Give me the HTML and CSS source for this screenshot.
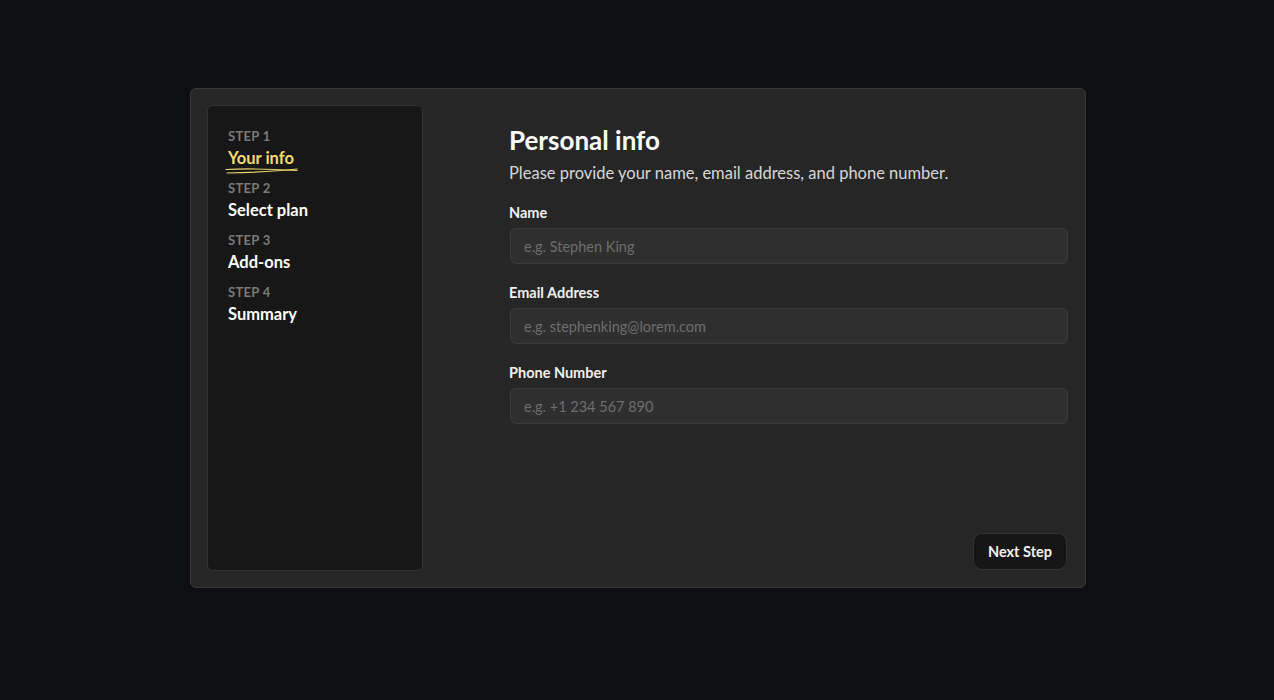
FILE: index.html
```html
<!DOCTYPE html>
<html lang="en">
<head>
<meta charset="utf-8">
<title>Multi-step form</title>
<link rel="stylesheet" href="styles.css">
</head>
<body>
<div class="page">
  <div class="card">
    <aside class="sidebar">
      <div class="step">
        <div class="step-num">Step 1</div>
        <div class="step-name active">Your info
          <svg class="scribble" width="74" height="8" viewBox="0 0 74 8"><path d="M1 2.5 C20 1.5 45 2 72 3.5" stroke="#e8d36a" stroke-width="1.2" fill="none" stroke-linecap="round"/><path d="M2 6 C25 5.5 50 4.5 72 2" stroke="#e8d36a" stroke-width="1.2" fill="none" stroke-linecap="round"/></svg>
        </div>
      </div>
      <div class="step">
        <div class="step-num">Step 2</div>
        <div class="step-name">Select plan</div>
      </div>
      <div class="step">
        <div class="step-num">Step 3</div>
        <div class="step-name">Add-ons</div>
      </div>
      <div class="step">
        <div class="step-num">Step 4</div>
        <div class="step-name">Summary</div>
      </div>
    </aside>
    <main class="main">
      <h1 class="title">Personal info</h1>
      <p class="subtitle">Please provide your name, email address, and phone number.</p>
      <div class="field">
        <label class="label">Name</label>
        <input class="input" type="text" placeholder="e.g. Stephen King">
      </div>
      <div class="field">
        <label class="label">Email Address</label>
        <input class="input" type="text" placeholder="e.g. stephenking@lorem.com">
      </div>
      <div class="field">
        <label class="label">Phone Number</label>
        <input class="input" type="text" placeholder="e.g. +1 234 567 890">
      </div>
      <div class="actions">
        <button class="btn">Next Step</button>
      </div>
    </main>
  </div>
</div>
</body>
</html>
```
FILE: styles.css
```css
* { box-sizing: border-box; }
html, body { margin: 0; padding: 0; }
body {
  background: #0d0f12;
  font-family: Lato, "Noto Sans", sans-serif;
  color: #f2f2f2;
}
.page {
  padding: 88px 0 0 190px;
}
.card {
  width: 896px;
  height: 500px;
  background: #262626;
  border: 1px solid #3a3a3a;
  border-radius: 6px;
  padding: 16px 17px 16px 16px;
  display: grid;
  grid-template-columns: 216px 1fr;
}
.sidebar {
  background: #171717;
  border: 1px solid #323232;
  border-radius: 6px;
  padding: 21px 20px;
  display: flex;
  flex-direction: column;
  gap: 8px;
}
.step-num {
  font-size: 13px;
  font-weight: 700;
  color: #7a7a7a;
  text-transform: uppercase;
  letter-spacing: 0.3px;
  line-height: 18px;
}
.step-name {
  font-size: 16.5px;
  font-weight: 700;
  color: #ffffff;
  line-height: 26px;
  position: relative;
}
.step-name.active { color: #f4dc6c; }
.scribble {
  position: absolute;
  left: -3px;
  top: 22px;
}
.main {
  padding: 19px 0 1px 86px;
  display: flex;
  flex-direction: column;
}
.title {
  margin: 0;
  font-size: 26px;
  font-weight: 700;
  line-height: 32px;
  color: #ffffff;
}
.subtitle {
  margin: 6px 0 20px;
  font-size: 16.5px;
  line-height: 22px;
  color: #d6d6d6;
}
.field {
  display: flex;
  flex-direction: column;
  margin-bottom: 20px;
}
.label {
  font-size: 14.5px;
  font-weight: 700;
  color: #f0f0f0;
  line-height: 18px;
  margin-bottom: 6px;
}
.input {
  height: 36px;
  margin-left: 1px;
  background: #2f2f2f;
  border: 1px solid #3a3a3a;
  border-radius: 6px;
  padding: 0 13px;
  font-family: inherit;
  font-size: 14.5px;
  color: #eeeeee;
  outline: none;
}
.input::placeholder { color: #6e6e6e; }
.actions {
  margin-top: auto;
  display: flex;
  justify-content: flex-end;
}
.btn {
  height: 37px;
  padding: 0 14px;
  margin-right: 1px;
  background: #161616;
  border: 1px solid #323232;
  border-radius: 9px;
  font-family: inherit;
  font-size: 14.5px;
  font-weight: 700;
  color: #f2f2f2;
}
```
